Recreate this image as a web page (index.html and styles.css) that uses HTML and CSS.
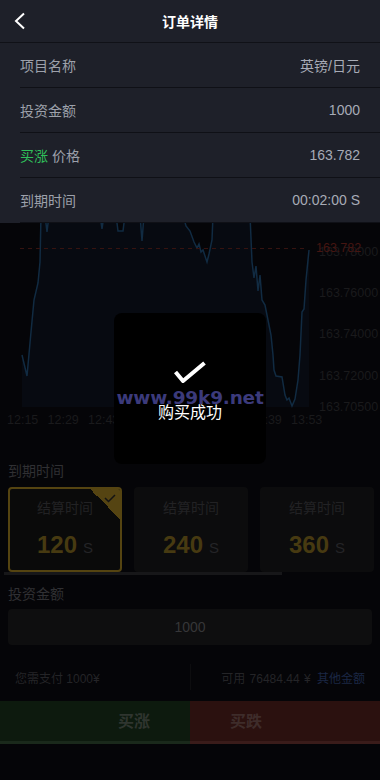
FILE: index.html
```html
<!DOCTYPE html>
<html lang="zh-CN">
<head>
<meta charset="utf-8">
<title>订单详情</title>
<link rel="stylesheet" href="styles.css">
</head>
<body>
<div class="page">
  <div class="detail">
    <div class="detail-header">
      <div class="back">
        <svg width="14" height="18" viewBox="0 0 14 18"><polyline points="11,1.5 3,9 11,16.5" fill="none" stroke="#ffffff" stroke-width="2"/></svg>
      </div>
      <div class="title">订单详情</div>
      <div class="back"></div>
    </div>
    <div class="row"><span class="label">项目名称</span><span class="value">英镑/日元</span></div>
    <div class="row"><span class="label">投资金额</span><span class="value">1000</span></div>
    <div class="row"><span class="label"><span class="up">买涨</span> 价格</span><span class="value">163.782</span></div>
    <div class="row"><span class="label">到期时间</span><span class="value">00:02:00 S</span></div>
  </div>

  <div class="chart">
    <svg width="380" height="229" viewBox="0 223 380 229">
      <path class="area" d="M22,355 L27,376 L31,332 L34,300 L38,283 L40,262 L41,215 L45,215 L47,232 L49,215 L100,215 L102,229 L104,215 L116,215 L118,231 L123,231 L125,215 L140,215 L142,241 L144,215 L183,215 L186,226 L190,231 L194,242 L197,248 L199,244 L201,252 L203,250 L207,262 L209,254 L212,240 L213,215 L250,215 L252,262 L254,278 L256,266 L258,291 L260,275 L262,300 L265,305 L268,320 L271,335 L273,355 L274,370 L276,376 L282,377 L285,395 L287,400 L289,398 L292,406 L295,399 L298,380 L300,355 L302,312 L304,309 L306,280 L309,250 L309,407 L22,407 Z"/>
      <path class="line" d="M22,355 L27,376 L31,332 L34,300 L38,283 L40,262 L41,215 L45,215 L47,232 L49,215 L100,215 L102,229 L104,215 L116,215 L118,231 L123,231 L125,215 L140,215 L142,241 L144,215 L183,215 L186,226 L190,231 L194,242 L197,248 L199,244 L201,252 L203,250 L207,262 L209,254 L212,240 L213,215 L250,215 L252,262 L254,278 L256,266 L258,291 L260,275 L262,300 L265,305 L268,320 L271,335 L273,355 L274,370 L276,376 L282,377 L285,395 L287,400 L289,398 L292,406 L295,399 L298,380 L300,355 L302,312 L304,309 L306,280 L309,250"/>
      <line class="price-line" x1="20" y1="248.5" x2="306" y2="248.5"/>
      <text class="axis" x="319" y="256">163.78000</text>
      <text class="price-tag" x="316" y="252">163.782</text>
      <text class="axis" x="319" y="297">163.76000</text>
      <text class="axis" x="319" y="337.5">163.74000</text>
      <text class="axis" x="319" y="380">163.72000</text>
      <text class="axis" x="319" y="410.5">163.70500</text>
      <text class="axis" x="7" y="424">12:15</text>
      <text class="axis" x="47.5" y="424">12:29</text>
      <text class="axis" x="88" y="424">12:43</text>
      <text class="axis" x="128.5" y="424">12:57</text>
      <text class="axis" x="169" y="424">13:11</text>
      <text class="axis" x="210" y="424">13:25</text>
      <text class="axis" x="250.5" y="424">13:39</text>
      <text class="axis" x="291" y="424">13:53</text>
    </svg>
  </div>

  <div class="section">
    <div class="sec-label">到期时间</div>
    <div class="cards">
      <div class="card active">
        <div class="corner">
          <svg width="12" height="9" viewBox="0 0 12 9"><polyline points="1,4 4.5,7.5 11,1" fill="none" stroke="#141414" stroke-width="1.5"/></svg>
        </div>
        <div class="card-title">结算时间</div>
        <div class="card-num"><b>120</b><span>S</span></div>
      </div>
      <div class="card">
        <div class="card-title">结算时间</div>
        <div class="card-num"><b>240</b><span>S</span></div>
      </div>
      <div class="card">
        <div class="card-title">结算时间</div>
        <div class="card-num"><b>360</b><span>S</span></div>
      </div>
    </div>
    <div class="slider"></div>
    <div class="sec-label second">投资金额</div>
    <div class="amount">1000</div>
    <div class="pay">
      <div class="pay-left">您需支付 1000¥</div>
      <div class="divider"></div>
      <div class="pay-right">可用 76484.44 ¥ <span class="other">其他金额</span></div>
    </div>
  </div>

  <div class="actions">
    <div class="btn btn-up">买涨</div>
    <div class="btn btn-down">买跌</div>
  </div>
</div>

<div class="toast">
  <svg class="check" width="32" height="24" viewBox="0 0 32 24"><polyline points="1.5,12 9,21 30.5,3" fill="none" stroke="#ffffff" stroke-width="4" stroke-linejoin="round"/></svg>
  <div class="watermark">www.99k9.net</div>
  <div class="toast-text">购买成功</div>
</div>
</body>
</html>
```

FILE: styles.css
```css
* {
  box-sizing: border-box;
  margin: 0;
  padding: 0;
}

html, body {
  width: 380px;
  height: 780px;
  overflow: hidden;
}

body {
  position: relative;
  background: #050508;
  font-family: "Liberation Sans", "Noto Sans CJK SC", sans-serif;
}

.page {
  width: 380px;
}

/* order detail popup */
.detail {
  background: #1e2029;
}

.detail-header {
  height: 43px;
  display: flex;
  align-items: center;
  border-bottom: 1px solid #101117;
}

.back {
  width: 40px;
  padding-left: 13px;
  display: flex;
  align-items: center;
}

.title {
  flex: 1;
  text-align: center;
  color: #ffffff;
  font-size: 14px;
  font-weight: bold;
}

.row {
  height: 45px;
  margin-left: 20px;
  padding-right: 20px;
  display: flex;
  align-items: center;
  justify-content: space-between;
  border-bottom: 1px solid #0f1016;
  font-size: 14px;
}

.label {
  color: #9da1ab;
}

.value {
  color: #a7abb6;
}

.up {
  color: #2fbf5a;
}

/* chart */
.chart {
  height: 229px;
}

.chart svg {
  display: block;
}

.area {
  fill: #070a11;
}

.line {
  fill: none;
  stroke: #112b42;
  stroke-width: 1.5;
}

.price-line {
  stroke: #361310;
  stroke-width: 1;
  stroke-dasharray: 4 4;
}

.axis {
  fill: #1a1a1c;
  font-size: 12.5px;
  font-family: "Liberation Sans", sans-serif;
}

.price-tag {
  fill: #451511;
  font-size: 12.5px;
  font-family: "Liberation Sans", sans-serif;
}

/* trade section (dimmed) */
.section {
  padding: 9px 8px 0 8px;
}

.sec-label {
  height: 20px;
  line-height: 20px;
  font-size: 14px;
  color: #303033;
}

.sec-label.second {
  margin-top: 9px;
}

.cards {
  margin-top: 6px;
  display: grid;
  grid-template-columns: repeat(3, 114px);
  gap: 12px;
}

.card {
  position: relative;
  height: 85px;
  background: #0c0c0d;
  border-radius: 4px;
  display: flex;
  flex-direction: column;
  align-items: center;
  overflow: hidden;
}

.card.active {
  border: 2px solid #554411;
  background: #0a0a0a;
}

.corner {
  position: absolute;
  top: 0;
  right: 0;
  width: 30px;
  height: 30px;
  background: linear-gradient(to bottom left, #554412 50%, transparent 50%);
}

.corner svg {
  position: absolute;
  top: 5px;
  right: 4px;
}

.card-title {
  margin-top: 11px;
  font-size: 14px;
  color: #222224;
  line-height: 20px;
}

.card.active .card-title {
  margin-top: 9px;
}

.card-num {
  margin-top: 13px;
  display: flex;
  align-items: baseline;
  gap: 6px;
}

.card-num b {
  font-size: 24px;
  color: #473a11;
}

.card-num span {
  font-size: 15px;
  color: #242427;
}

.slider {
  margin-left: -4px;
  width: 278px;
  height: 3px;
  background: #171719;
}

.amount {
  margin-top: 5px;
  height: 36px;
  border-radius: 4px;
  background: #0e0e0f;
  display: flex;
  align-items: center;
  justify-content: center;
  font-size: 14px;
  color: #363638;
}

.pay {
  margin-top: 17px;
  height: 30px;
  padding: 0 7px;
  display: grid;
  grid-template-columns: 1fr 1px 1fr;
  align-items: center;
  font-size: 12px;
  color: #242427;
}

.divider {
  height: 26px;
  background: #0d0d0f;
}

.pay-right {
  text-align: right;
  word-spacing: 1px;
}

.other {
  color: #1b2744;
  margin-left: 2px;
}

.actions {
  margin-top: 9px;
  display: flex;
}

.btn {
  flex: 1;
  height: 43px;
  display: flex;
  align-items: center;
  font-size: 16px;
  font-weight: bold;
  padding-bottom: 3px;
}

.btn-up {
  justify-content: flex-end;
  padding-right: 40px;
  background: #0d1a0e;
  border-bottom: 3px solid #1a291b;
  color: #2f352f;
}

.btn-down {
  justify-content: flex-start;
  padding-left: 40px;
  background: #2b110f;
  border-bottom: 3px solid #3a1c1a;
  color: #3e2c2a;
}

/* toast overlay */
.toast {
  position: absolute;
  left: 114px;
  top: 313px;
  width: 152px;
  height: 151px;
  background: #000000;
  border-radius: 8px;
  display: flex;
  flex-direction: column;
  align-items: center;
  padding-top: 47px;
}

.check {
  display: block;
}

.watermark {
  position: absolute;
  left: 0;
  top: 74px;
  width: 152px;
  text-align: center;
  font-family: "DejaVu Sans", sans-serif;
  font-weight: bold;
  font-size: 18.5px;
  letter-spacing: -0.2px;
  color: #3b3a7b;
  white-space: nowrap;
}

.toast-text {
  position: relative;
  margin-top: 18px;
  font-size: 16px;
  line-height: 22px;
  color: #ffffff;
}
```
